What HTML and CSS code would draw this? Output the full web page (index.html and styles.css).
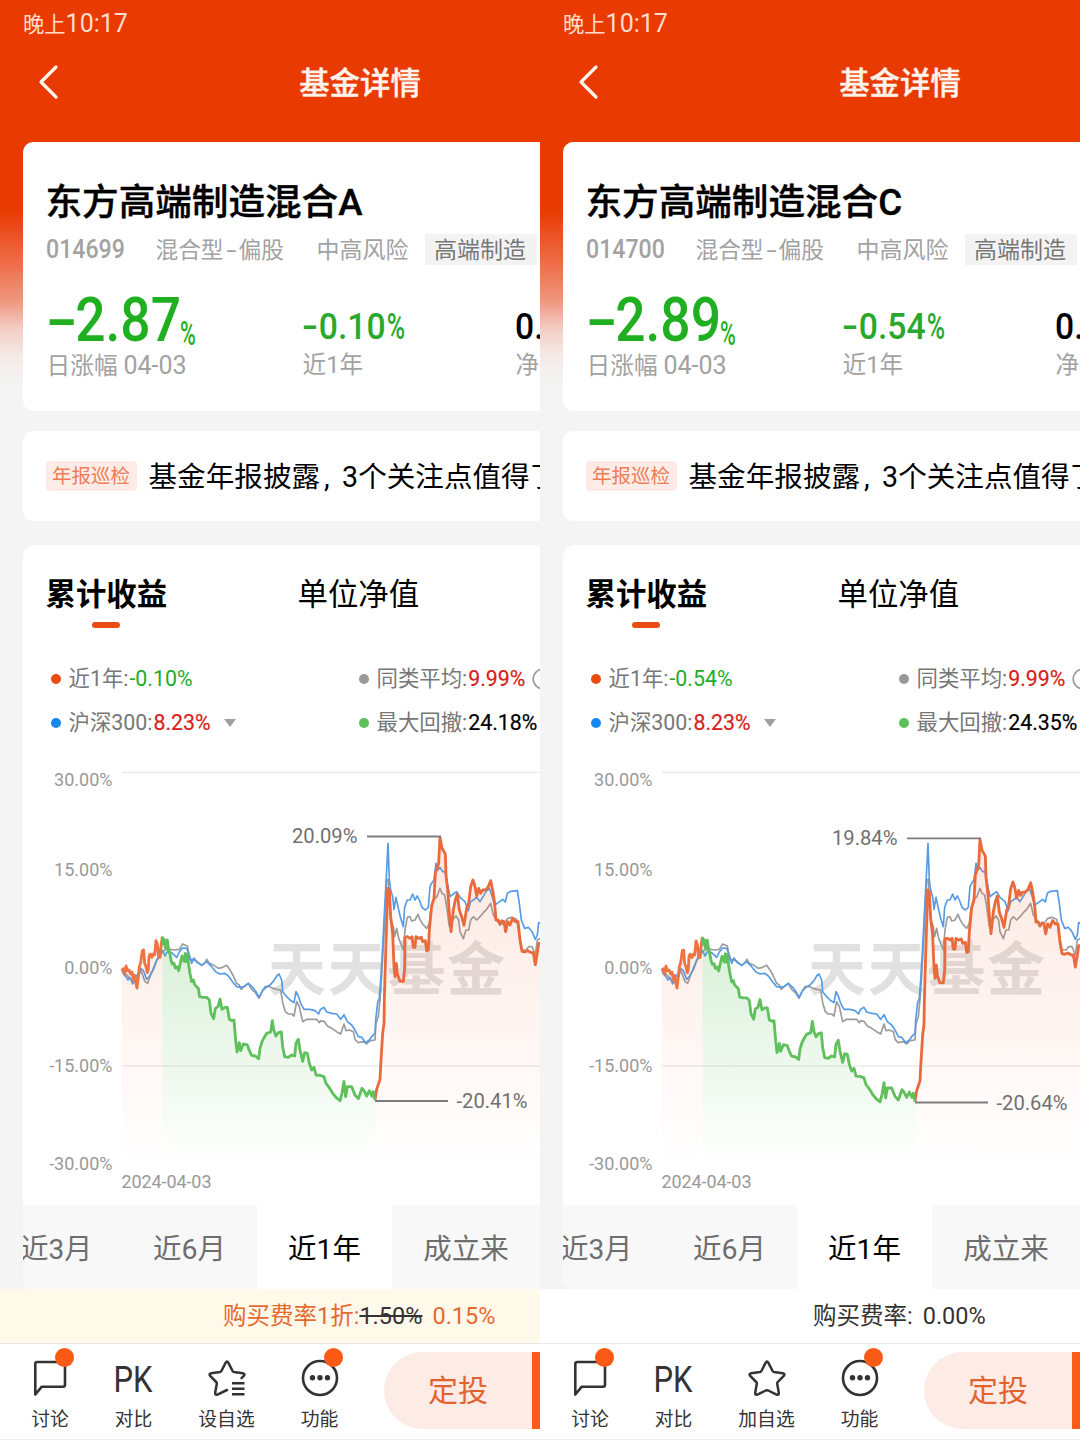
FILE: index.html
```html
<!DOCTYPE html>
<html lang="zh-CN">
<head>
<meta charset="utf-8">
<title>基金详情</title>
<link rel="stylesheet" href="styles.css">
</head>
<body>
<svg class="defs" width="0" height="0" aria-hidden="true">
  <defs>
    <linearGradient id="fade-orange" gradientUnits="userSpaceOnUse" x1="0" y1="50" x2="0" y2="1029">
      <stop offset="0" stop-color="#f26b3c" stop-opacity=".16"/>
      <stop offset="1" stop-color="#f26b3c" stop-opacity="0"/>
    </linearGradient>
    <linearGradient id="fade-green" gradientUnits="userSpaceOnUse" x1="0" y1="350" x2="0" y2="1029">
      <stop offset="0" stop-color="#5cc05a" stop-opacity=".24"/>
      <stop offset="1" stop-color="#5cc05a" stop-opacity="0"/>
    </linearGradient>

    <g id="market" fill="none" stroke-linejoin="round" stroke-width="5">
      <g stroke="#9c9c9c">
        <path d="M36,450 42,456 55,470 65,482 80,490 92,450 105,485 113,490 122,465 132,445 140,422 150,410 158,395 168,388 180,388 195,390 208,388 218,372 232,378 240,420 250,418 262,425 275,436 285,428 290,418 298,430 312,436 325,445 338,442 350,436 360,450 370,468 380,490 388,495 394,508 404,498 415,490 425,508 436,518 447,535 456,515 465,500 478,500 490,505 500,508 512,510 518,548 526,575 535,582 545,582 552,588 560,545 568,560 578,605 590,598 605,598 620,598 628,608 632,602"/>
        <path transform="translate(630 0)" d="M0,602 12,604 22,618 35,625 50,635 62,642 72,612 78,632 88,630 100,635 106,660 115,668 130,665 140,672 150,662 165,660 168,610 175,590 180,540 185,470 190,380 195,280 200,180 205,178 208,240 212,300 220,320 224,350 230,325 236,355 244,375 250,390 255,330 262,292 270,290 275,303 285,300 294,283 300,298 308,312 320,325 328,310 332,275 338,245 344,235 350,232 360,205 366,220 374,225 380,260 388,320 398,300 408,288 416,300 420,335 430,356 438,330 446,330 452,300 460,290 470,300 480,290 490,278 500,268 512,250 520,285 530,300 540,315 552,310 564,295 576,292 590,298 598,345 606,390 618,390 626,380 636,380 646,405 652,360 662,355"/>
      </g>
      <g stroke="#559be6">
        <path d="M36,450 40,462 48,470 54,480 60,472 68,492 75,475 85,460 92,445 100,452 110,478 118,470 128,450 140,420 150,400 158,392 165,408 172,395 185,398 200,412 208,396 218,384 230,385 238,405 245,430 252,414 262,428 275,436 290,425 305,440 318,456 330,462 345,460 355,468 368,486 380,500 392,502 402,500 415,490 428,502 438,515 447,532 458,512 470,500 480,495 492,482 500,468 507,462 515,480 518,515 530,530 540,540 552,548 558,515 565,528 572,550 582,568 600,568 615,572 626,582 631,569"/>
        <path transform="translate(630 0)" d="M0,569 12,562 20,576 35,580 50,582 62,598 72,584 82,605 95,615 105,630 115,650 125,652 137,668 148,660 155,650 165,640 167,600 173,548 178,535 182,480 188,380 192,300 199,170 204,70 208,180 212,210 218,230 222,268 228,232 235,265 242,295 250,320 254,262 262,240 270,240 278,222 285,240 292,228 298,240 306,262 316,270 325,262 330,200 336,188 342,180 348,130 354,150 360,142 368,155 375,155 382,190 390,230 400,222 410,215 420,232 435,245 445,272 452,245 460,240 470,232 480,245 488,232 498,215 508,205 515,225 524,255 535,248 548,238 556,246 562,220 572,214 592,212 598,250 604,300 614,325 625,322 636,335 646,358 652,345 656,308 662,310"/>
      </g>
    </g>

    <g id="fund" stroke-linejoin="round">
      <path fill="url(#fade-orange)" d="M35,452 40,446 44,462 48,438 52,452 57,450 62,462 66,456 70,478 74,466 78,490 81,504 85,470 88,440 92,428 97,392 101,390 104,430 108,440 112,458 115,448 117,408 121,402 126,412 130,402 134,404 138,362 142,372 146,410 150,412 153,380 157,350 V1029 H35Z"/>
      <path fill="url(#fade-green)" d="M157,350 160,372 163,358 167,385 172,360 176,390 179,398 183,420 187,432 192,430 196,444 201,440 206,452 211,430 216,408 220,415 223,425 226,400 229,425 232,402 236,435 240,460 245,485 250,480 254,494 260,500 265,505 269,530 280,532 290,532 298,540 303,580 311,596 316,565 324,560 330,537 336,568 345,562 352,562 358,598 366,602 372,600 377,660 381,696 388,668 392,692 400,672 412,675 418,692 425,706 436,708 446,716 450,685 456,665 464,650 470,640 482,636 487,602 492,632 498,648 505,638 514,636 518,680 524,710 535,712 545,705 554,708 558,670 565,658 570,690 578,724 584,698 592,700 598,730 605,750 612,742 618,765 630,766 642,770 648,790 658,803 668,820 680,834 690,842 696,820 702,784 707,830 712,800 725,800 735,825 745,836 756,805 762,812 770,828 778,812 786,828 790,815 795,840 V1029 H157Z"/>
      <path transform="translate(630 0)" fill="url(#fade-orange)" d="M165,840 170,808 180,778 183,720 188,640 192,610 193,540 197,400 203,205 208,210 212,290 218,340 222,440 225,470 229,430 232,462 240,484 250,484 254,445 255,352 262,350 270,355 276,350 280,382 285,382 288,350 296,355 304,352 308,365 316,362 320,392 325,390 328,330 335,258 342,235 346,160 356,130 360,52 366,85 376,102 378,165 384,220 388,280 393,335 400,270 406,240 412,222 418,270 425,290 432,316 440,265 446,250 452,200 459,180 464,195 470,228 476,205 482,220 488,210 496,210 504,202 512,182 518,210 524,250 528,300 535,300 540,312 546,302 552,305 557,335 563,305 570,315 578,295 586,305 594,305 600,360 606,394 614,396 624,392 634,398 640,398 646,434 652,398 656,370 662,370 V1029 H165Z"/>
      <g fill="none" stroke-width="8.500">
        <path stroke="#ef7442" d="M35,452 40,446 44,462 48,438 52,452 57,450 62,462 66,456 70,478 74,466 78,490 81,504 85,470 88,440 92,428 97,392 101,390 104,430 108,440 112,458 115,448 117,408 121,402 126,412 130,402 134,404 138,362 142,372 146,410 150,412 153,380 157,350"/>
        <path stroke="#ea6a3e" transform="translate(630 0)" d="M165,840 170,808 180,778 183,720 188,640 192,610 193,540 197,400 203,205 208,210 212,290 218,340 222,440 225,470 229,430 232,462 240,484 250,484 254,445 255,352 262,350 270,355 276,350 280,382 285,382 288,350 296,355 304,352 308,365 316,362 320,392 325,390 328,330 335,258 342,235 346,160 356,130 360,52 366,85 376,102 378,165 384,220 388,280 393,335 400,270 406,240 412,222 418,270 425,290 432,316 440,265 446,250 452,200 459,180 464,195 470,228 476,205 482,220 488,210 496,210 504,202 512,182 518,210 524,250 528,300 535,300 540,312 546,302 552,305 557,335 563,305 570,315 578,295 586,305 594,305 600,360 606,394 614,396 624,392 634,398 640,398 646,434 652,398 656,370 662,370"/>
        <path stroke="#5fc05c" d="M157,350 160,372 163,358 167,385 172,360 176,390 179,398 183,420 187,432 192,430 196,444 201,440 206,452 211,430 216,408 220,415 223,425 226,400 229,425 232,402 236,435 240,460 245,485 250,480 254,494 260,500 265,505 269,530 280,532 290,532 298,540 303,580 311,596 316,565 324,560 330,537 336,568 345,562 352,562 358,598 366,602 372,600 377,660 381,696 388,668 392,692 400,672 412,675 418,692 425,706 436,708 446,716 450,685 456,665 464,650 470,640 482,636 487,602 492,632 498,648 505,638 514,636 518,680 524,710 535,712 545,705 554,708 558,670 565,658 570,690 578,724 584,698 592,700 598,730 605,750 612,742 618,765 630,766 642,770 648,790 658,803 668,820 680,834 690,842 696,820 702,784 707,830 712,800 725,800 735,825 745,836 756,805 762,812 770,828 778,812 786,828 790,815 795,840"/>
      </g>
    </g>

    <g id="axes">
      <path d="M122 772.5H540M122 1066H540" stroke="#ececec" stroke-width="1.4"/>
      <g class="axis" text-anchor="end">
        <text x="112.5" y="785.5">30.00%</text>
        <text x="112.5" y="876">15.00%</text>
        <text x="112.5" y="973.5">0.00%</text>
        <text x="112.5" y="1071.5">-15.00%</text>
        <text x="112.5" y="1169.5">-30.00%</text>
      </g>
      <text class="axis" x="121.5" y="1187.5" textLength="90">2024-04-03</text>
      <text class="watermark" x="268" y="990" textLength="237">天天基金</text>
    </g>

    <symbol id="i-back" viewBox="0 0 22 36"><path d="M19 3 4 18l15 15" fill="none" stroke="#fff3ec" stroke-width="3.2" stroke-linecap="round" stroke-linejoin="round"/></symbol>
    <symbol id="i-chat" viewBox="0 0 40 40"><path d="M5.300 36.500V6Q5.300 4 7.300 4H33Q35 4 35 6V26.700Q35 28.700 33 28.700H11.800Z" fill="none" stroke="#333" stroke-width="2.600" stroke-linejoin="round"/></symbol>
    <symbol id="i-star" viewBox="0 0 40 40"><path d="M18.700 4.600Q20 2.600 21.300 4.600L25.600 13Q26 13.800 27 14L35.800 15.300Q38.500 15.900 36.800 17.800L30.800 24Q30 24.800 30.200 25.800L31.800 34.800Q32 37.600 29.600 36.600L21.200 32.500Q20 32 18.800 32.500L10.400 36.600Q8 37.600 8.200 34.800L9.800 25.800Q10 24.800 9.200 24L3.200 17.800Q1.500 15.900 4.200 15.300L13 14Q14 13.800 14.400 13Z" fill="none" stroke="#333" stroke-width="2.500" stroke-linejoin="round"/></symbol>
    <symbol id="i-star-list" viewBox="0 0 40 40"><path d="M20 32 10.400 36.600Q8 37.600 8.200 34.800L9.800 25.800Q10 24.800 9.200 24L3.200 17.800Q1.500 15.900 4.200 15.300L13 14Q14 13.800 14.400 13L18.700 4.600Q20 2.600 21.300 4.600L25.600 13Q26 13.800 27 14L35.800 15.300Q38.500 15.900 36.800 17.800L34.500 20.200" fill="none" stroke="#333" stroke-width="2.500" stroke-linejoin="round" stroke-linecap="round"/><path d="M25 25.200H37.500M25 30.700H37.500M25 36.200H37.500" stroke="#333" stroke-width="2.500"/></symbol>
    <symbol id="i-more" viewBox="0 0 40 40"><circle cx="20" cy="20" r="17" fill="none" stroke="#333" stroke-width="2.600"/><g fill="#333"><circle cx="12.500" cy="19.800" r="2.700"/><circle cx="20" cy="19.800" r="2.700"/><circle cx="27.500" cy="19.800" r="2.700"/></g></symbol>
    <symbol id="i-info" viewBox="0 0 22 22"><circle cx="11" cy="11" r="9.800" fill="none" stroke="#999" stroke-width="1.600"/></symbol>
  </defs>
</svg>

<main class="compare">
  <section class="phone">
    <header class="top">
      <div class="status">晚上<span>10:17</span></div>
      <div class="nav"><svg class="back"><use href="#i-back"/></svg><h1>基金详情</h1></div>
    </header>

    <article class="card summary">
      <h2>东方高端制造混合A</h2>
      <div class="meta"><span class="code">014699</span><span class="type">混合型<i>-</i>偏股</span><span class="risk">中高风险</span><span class="tag">高端制造</span></div>
      <div class="figures">
        <div class="fig day"><div class="value"><b><i class="sign">-</i>2.87</b><small>%</small></div><label>日涨幅 <i>04-03</i></label></div>
        <div class="fig year"><div class="value"><b><i class="sign">-</i>0.10<i class="pct">%</i></b></div><label>近1年</label></div>
        <div class="fig nav-value"><div class="value"><b>0.</b></div><label>净值</label></div>
      </div>
    </article>

    <article class="card notice"><span class="badge">年报巡检</span><p>基金年报披露<i>,</i>3个关注点值得了解</p></article>

    <article class="card returns">
      <div class="tabs"><span class="tab on">累计收益</span><span class="tab">单位净值</span></div>
      <div class="legend">
        <div class="item orange">近1年:<b class="down">-0.10%</b></div>
        <div class="item gray">同类平均:<b class="up">9.99%</b><svg class="info"><use href="#i-info"/></svg></div>
        <div class="item blue">沪深300:<b class="up">8.23%</b><span class="caret"></span></div>
        <div class="item green">最大回撤:<b>24.18%</b></div>
      </div>
      <svg class="chart" viewBox="23 760 517 445">
        <use href="#axes"/>
        <g transform="translate(110 820) scale(.33333)">
          <use href="#market"/>
          <use href="#fund"/>
        </g>
        <path d="M367 836.500H441M375 1101H448" stroke="#7c7c7c" stroke-width="1.800"/>
        <text class="mark" x="292" y="843">20.09%</text>
        <text class="mark" x="456.500" y="1108">-20.41%</text>
      </svg>
      <div class="periods"><span class="first">近3月</span><span>近6月</span><span class="on">近1年</span><span class="last">成立来</span></div>
    </article>

    <div class="fee promo"><span>购买费率1折:</span><s>1.50%</s><span class="rate">0.15%</span></div>

    <footer class="bar">
      <div class="action chat"><svg><use href="#i-chat"/></svg><em class="dot"></em><label>讨论</label></div>
      <div class="action pk"><strong>PK</strong><label>对比</label></div>
      <div class="action star"><svg><use href="#i-star-list"/></svg><label>设自选</label></div>
      <div class="action more"><svg><use href="#i-more"/></svg><em class="dot"></em><label>功能</label></div>
      <div class="invest">定投</div><div class="buy"></div>
    </footer>
  </section>

  <section class="phone">
    <header class="top">
      <div class="status">晚上<span>10:17</span></div>
      <div class="nav"><svg class="back"><use href="#i-back"/></svg><h1>基金详情</h1></div>
    </header>

    <article class="card summary">
      <h2>东方高端制造混合C</h2>
      <div class="meta"><span class="code">014700</span><span class="type">混合型<i>-</i>偏股</span><span class="risk">中高风险</span><span class="tag">高端制造</span></div>
      <div class="figures">
        <div class="fig day"><div class="value"><b><i class="sign">-</i>2.89</b><small>%</small></div><label>日涨幅 <i>04-03</i></label></div>
        <div class="fig year"><div class="value"><b><i class="sign">-</i>0.54<i class="pct">%</i></b></div><label>近1年</label></div>
        <div class="fig nav-value"><div class="value"><b>0.</b></div><label>净值</label></div>
      </div>
    </article>

    <article class="card notice"><span class="badge">年报巡检</span><p>基金年报披露<i>,</i>3个关注点值得了解</p></article>

    <article class="card returns">
      <div class="tabs"><span class="tab on">累计收益</span><span class="tab">单位净值</span></div>
      <div class="legend">
        <div class="item orange">近1年:<b class="down">-0.54%</b></div>
        <div class="item gray">同类平均:<b class="up">9.99%</b><svg class="info"><use href="#i-info"/></svg></div>
        <div class="item blue">沪深300:<b class="up">8.23%</b><span class="caret"></span></div>
        <div class="item green">最大回撤:<b>24.35%</b></div>
      </div>
      <svg class="chart" viewBox="23 760 517 445">
        <use href="#axes"/>
        <g transform="translate(110 820) scale(.33333)">
          <use href="#market"/>
          <use href="#fund" transform="matrix(1 .0057 0 1 0 -.2)"/>
        </g>
        <path d="M367 838.300H441M375 1102.500H448" stroke="#7c7c7c" stroke-width="1.800"/>
        <text class="mark" x="292" y="845">19.84%</text>
        <text class="mark" x="456.500" y="1109.500">-20.64%</text>
      </svg>
      <div class="periods"><span class="first">近3月</span><span>近6月</span><span class="on">近1年</span><span class="last">成立来</span></div>
    </article>

    <div class="fee"><span>购买费率:</span><span class="rate">0.00%</span></div>

    <footer class="bar">
      <div class="action chat"><svg><use href="#i-chat"/></svg><em class="dot"></em><label>讨论</label></div>
      <div class="action pk"><strong>PK</strong><label>对比</label></div>
      <div class="action star"><svg><use href="#i-star"/></svg><label>加自选</label></div>
      <div class="action more"><svg><use href="#i-more"/></svg><em class="dot"></em><label>功能</label></div>
      <div class="invest">定投</div><div class="buy"></div>
    </footer>
  </section>
</main>
</body>
</html>
```
FILE: styles.css
```css
* { box-sizing: border-box; margin: 0; padding: 0; }
body {
  width: 1080px; height: 1440px; overflow: hidden; background: #f4f4f4; color: #000;
  font-family: Roboto, "Noto Sans CJK SC", sans-serif;
}
i, em { font-style: normal; }
svg { display: block; flex: none; }
.defs { position: absolute; }
.compare { display: flex; }
.phone {
  width: 540px; height: 1440px; overflow: hidden; display: flex; flex-direction: column;
  white-space: nowrap;
  background: linear-gradient(#e93a02 0, #e93a02 210px, #ee6f4a 265px, #ef957e 300px, #f3cfc6 330px, #f4e9e6 355px, #f4f4f4 385px);
}

.top { height: 142px; color: #fff3ec; flex: none; }
.status { height: 46px; padding-left: 23px; font-size: 21.300px; line-height: 47px; color: #ffdccb; }
.status span { font-size: 25px; }
.nav { height: 72px; display: flex; align-items: center; }
.back { width: 22px; height: 36px; margin-left: 37px; }
.nav h1 { flex: 1; margin-right: -121px; text-align: center; font-size: 30.400px; font-weight: 500; line-height: 72px; padding-top: 3px; -webkit-text-stroke: .4px currentColor; }

.card { margin-left: 22.500px; background: #fff; border-radius: 10px 0 0 10px; flex: none; overflow: hidden; }

.summary { height: 269px; padding: 36px 0 0 23px; }
.summary h2 { height: 50px; line-height: 50px; font-size: 36.600px; font-weight: 500; -webkit-text-stroke: .4px currentColor; }
.meta { height: 32px; margin-top: 5px; display: flex; align-items: center; font-size: 23px; line-height: 34px; color: #a2a2a2; }
.meta span { flex: none; }
.code { width: 110px; font-size: 26px; font-weight: 500; transform: scaleX(.89); transform-origin: 0 50%; }
.type { width: 161px; padding-top: 3px; font-size: 22.700px; }
.type i { display: inline-block; width: 15px; text-align: center; transform: scaleX(1.6); }
.risk { width: 108.500px; padding-top: 3px; }
.tag { width: 112px; height: 31px; padding-left: 9px; background: #f3f3f3; color: #777; }
.figures { display: flex; margin-top: 12px; }
.fig { display: flex; flex-direction: column; flex: none; }
.day { width: 256px; color: #1faf20; }
.year { width: 213px; color: #2aa82c; }
.value { height: 72px; display: flex; align-items: flex-end; }
.value b { font-weight: 500; transform-origin: 0 100%; flex: none; }
.value i { display: inline-block; transform-origin: 0 50%; }
.day b { font-size: 62px; line-height: 58px; transform: scaleX(.86); width: 134.500px; }
.day .sign { width: 34px; transform: scaleX(1.75); }
.day small { font-size: 33px; font-weight: 500; line-height: 30px; transform: scaleX(.65); transform-origin: 0 100%; }
.year b, .nav-value b { font-size: 37px; line-height: 44px; transform: scaleX(.91); }
.year .sign { width: 18.500px; transform: scaleX(1.4); }
.year .pct { margin-left: 1px; transform: scaleX(.74); }
.fig label { height: 32px; line-height: 33px; padding-left: 1px; font-size: 23.700px; color: #a2a2a2; }
.fig label i { font-size: 25px; }

.notice { height: 90px; margin-top: 20px; padding-left: 23px; display: flex; align-items: center; }
.badge { width: 91px; height: 30px; flex: none; border-radius: 3px; background: #fdece6; color: #ee7c57; font-size: 19.500px; line-height: 31px; text-align: center; }
.notice p { margin-left: 12px; padding-top: 2px; font-size: 28.600px; line-height: 40px; }
.notice i { display: inline-block; width: 22px; padding-left: 4px; }

.returns { height: 744px; margin-top: 24px; border-radius: 12px 0 0 12px; }
.tabs { height: 98px; padding: 29px 0 0 23px; display: flex; }
.tab { width: 252px; flex: none; font-size: 30.400px; line-height: 42px; }
.tab.on { font-weight: 700; }
.tab.on::after { content: ""; display: block; width: 28px; height: 6px; margin: 6px 0 0 46px; border-radius: 3px; background: #e94e17; }
.legend { height: 117px; padding: 13px 0 0 28px; display: grid; grid-template: 44px 44px / 308px 182px; }
.item { display: flex; align-items: center; font-size: 21.400px; line-height: 30px; padding-top: 1px; color: #777; }
.item::before { content: ""; width: 10px; height: 10px; margin-right: 8px; border-radius: 50%; background: currentColor; flex: none; }
.item b { margin-left: 1px; font-weight: 400; color: #000; font-size: 21.300px; }
.item .down { color: #22ac26; }
.item .up { color: #d81e20; }
.gray b, .blue b, .green b { -webkit-text-stroke: .2px currentColor; }
.orange::before { background: #ea4c10; }
.gray::before { background: #999; }
.blue::before { background: #1787f2; }
.green::before { background: #5cc05a; }
.info { width: 22px; height: 22px; margin-left: 7px; }
.caret { margin-left: 13px; border: 6px solid transparent; border-top: 8px solid #a0a0a0; border-bottom: 0; }

.chart { width: 517px; height: 445px; margin-left: .5px; }
.axis { font-size: 18px; fill: #999; }
.mark { font-size: 20.200px; fill: #707070; }
.watermark { font: 700 58px "Noto Sans CJK SC", sans-serif; fill: #e1e1e1; }

.periods { height: 84px; display: flex; background: #f8f8f8; font-size: 28.500px; line-height: 86px; color: #6e6e6e; }
.periods span { width: 135px; padding-top: 2px; text-align: center; flex: none; }
.periods .first { width: 99.500px; text-align: left; text-indent: -2px; font-size: 28px; }
.periods .on { background: #fff; color: #000; }
.periods .last { width: 148px; }

.fee { height: 54px; flex: none; padding-left: 273px; display: flex; background: #fff; color: #333; font-size: 23.500px; line-height: 55px; }
.fee .rate { margin-left: 10px; }
.fee s { color: #333; }
.promo { padding-left: 223px; background: #fff9ea; color: #e46a30; }

.bar { height: 97px; flex: none; display: flex; background: #fff; border-top: 1px solid #e9e9e9; border-bottom: 1px solid #eee; }
.action { position: relative; display: flex; flex-direction: column; align-items: center; padding-top: 14px; color: #333; }
.action svg, .action strong { width: 40px; height: 40px; }
.action label { margin-top: 8px; font-size: 18.800px; line-height: 28px; }
.chat { width: 100px; }
.pk { width: 67px; }
.star { width: 119px; }
.more { width: 67px; }
.pk strong { font-size: 36px; line-height: 44px; font-weight: 400; text-align: center; display: flex; justify-content: center; transform: scaleX(.86); margin-left: -1px; }
.dot { position: absolute; width: 19px; height: 19px; border-radius: 50%; background: #fa5a14; left: 55px; top: 4px; }
.more .dot { left: 38px; }
.invest { width: 148px; height: 77px; margin: 8px 0 0 31px; border-radius: 38.500px 0 0 38.500px; background: #fdece6; color: #e4622e; font-size: 30px; line-height: 78px; text-align: center; }
.buy { width: 8px; height: 77px; margin-top: 8px; background: #fa5a1a; }
```
